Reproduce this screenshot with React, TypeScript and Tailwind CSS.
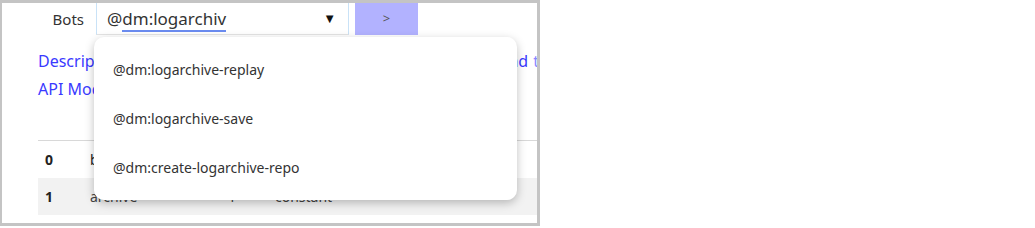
const options = [
  "@dm:logarchive-replay",
  "@dm:logarchive-save",
  "@dm:create-logarchive-repo",
];

export default function App() {
  return (
    <div className="h-[228px] w-[1035px] bg-white font-['Noto_Sans',sans-serif] text-[14px] text-[#222]">
      <div className="relative h-[226px] w-[540px] overflow-hidden border-[3px] border-l-[2px] border-[#c4c4c4]">
        {/* header row */}
        <div className="flex h-[32px] items-stretch">
          <div className="flex w-[94px] items-center justify-end pr-[12px] text-[15px] text-[#333]">
            Bots
          </div>
          <div className="flex w-[253px] items-center justify-between border-b border-l border-r border-[#c9e2f7] border-b-[#e4e4e4] pl-[10px] pr-[12px]">
            <span className="text-[17px] text-[#333]">
              @<span className="border-b-2 border-[#6b8cf0]">dm:logarchiv</span>
            </span>
            <span className="text-[13px] text-[#111]">▼</span>
          </div>
          <div className="ml-[6px] flex w-[63px] items-center justify-center bg-[#b2b2ff] text-[13px] text-[#555]">
            &gt;
          </div>
        </div>

        {/* links */}
        <div className="pl-[36px] pt-[12px] text-[16px] leading-[28px] text-[#3a3aff]">
          <div className="flex justify-between whitespace-nowrap">
            <span>Description of the bot</span>
            <span className="mr-[-2px]">
              and<span className="ml-[5px] opacity-60">t</span>
            </span>
          </div>
          <div className="whitespace-nowrap">API Models</div>
        </div>

        {/* table */}
        <div className="ml-[36px] mt-[37px] border-t border-[#d8d8d8]">
          <div className="flex h-[37px] items-center">
            <span className="w-[52px] pl-[7px] font-bold">0</span>
            <span className="w-[138px]">bots</span>
            <span className="w-[47px]">0</span>
            <span>constant</span>
          </div>
          <div className="flex h-[37px] items-center bg-[#f2f2f2]">
            <span className="w-[52px] pl-[7px] font-bold">1</span>
            <span className="w-[138px] text-[#444]">archive</span>
            <span className="w-[47px] text-[#444]">1</span>
            <span className="text-[#444]">constant</span>
          </div>
        </div>

        {/* dropdown menu */}
        <div className="absolute left-[92px] top-[34px] w-[423px] rounded-[10px] bg-white py-[8px] shadow-[0_3px_10px_rgba(0,0,0,0.25)]">
          {options.map((opt) => (
            <div key={opt} className="flex h-[49px] items-center pl-[19px] text-[14px] text-[#333]">
              {opt}
            </div>
          ))}
        </div>
      </div>
    </div>
  );
}
